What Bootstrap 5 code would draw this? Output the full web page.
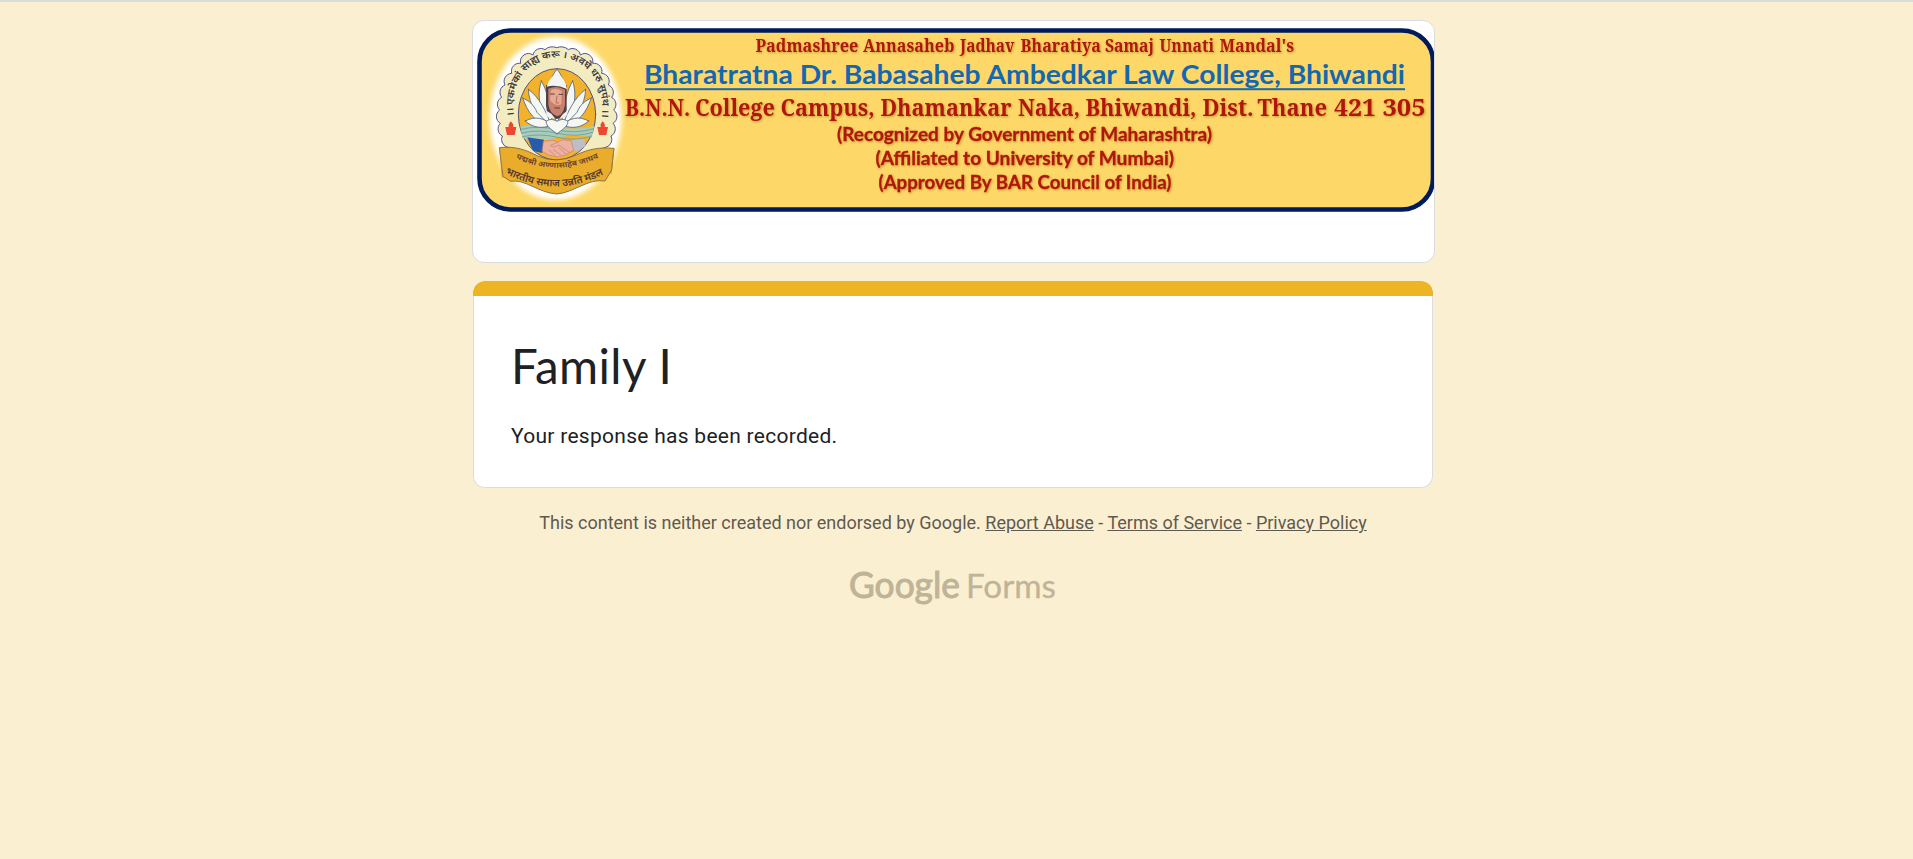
<!DOCTYPE html>
<html lang="en">
<head>
<meta charset="utf-8">
<meta name="viewport" content="width=device-width, initial-scale=1">
<title>Family I</title>
<link href="https://cdn.jsdelivr.net/npm/bootstrap@5.3.0/dist/css/bootstrap.min.css" rel="stylesheet">
<style>
  body { background: #fbefd2; border-top: 2px solid #dadce0; min-height: 100vh; padding-right: 7px; color: #202124; font-family: Roboto, Arial, sans-serif; }
  .form-column { width: 960px; padding-top: 18px; }
  .form-panel { border: 1px solid #dadce0; border-radius: 12px; overflow: hidden; }
  .banner-panel { width: 963px; height: 243px; margin-left: -1px; }
  .accent { height: 15px; background: #edb424; border-radius: 12px 12px 0 0; }
  .response-panel { margin-top: 18px; height: 207px; border: 0; box-shadow: inset 0 0 0 1px #dadce0; }
  .response-body { padding: 40px 37px 0 38px; }
  .form-title { font-family: Lato, sans-serif; font-size: 47.5px; line-height: 60px; letter-spacing: .45px; font-weight: 400; margin: 0; }
  .response-text { font-size: 21px; line-height: 30px; letter-spacing: .28px; margin: 25px 0 0; }
  .legal { font-size: 18px; line-height: 27px; color: #5f5a4f; margin-top: 21px; }
  .legal a { color: inherit; }
  .forms-logo { margin-top: 22px; }
  .serif { font-family: "Noto Serif", "DejaVu Serif Condensed", "DejaVu Serif", serif; font-weight: 700; }
  .sans { font-family: Lato, sans-serif; font-weight: 700; }
  .hindi { font-family: "Noto Sans Devanagari", "Noto Sans", sans-serif; font-weight: 600; }
</style>
</head>
<body>
<main class="form-column mx-auto">
  <section class="form-panel banner-panel bg-white">
    <svg class="d-block" width="961" height="241" viewBox="473 21 961 241">
      <defs>
        <filter id="glow" x="-20%" y="-20%" width="140%" height="140%"><feGaussianBlur stdDeviation="8"/></filter>
        <filter id="shade" x="-5%" y="-20%" width="110%" height="150%"><feDropShadow dx="1" dy="1" stdDeviation=".8" flood-color="#8a5a18" flood-opacity=".5"/></filter>
        <path id="arch" d="M147 318 C118 84 432 84 411 318"/>
        <path id="row1" d="M152 445 Q275 504 408 440"/>
        <path id="row2" d="M120 490 Q275 570 426 488"/>
      </defs>
      <rect x="479.5" y="30.5" width="953.5" height="179" rx="31" fill="#fdd767" stroke="#001b5c" stroke-width="4.6"/>
      <g transform="translate(465 10) scale(.33333)" stroke-linejoin="round" stroke-linecap="round">
        <ellipse cx="272" cy="325" rx="198" ry="245" fill="#fff" filter="url(#glow)"/>
        <path fill="#f3ecc0" stroke="#51518c" stroke-width="3" d="M128 412 A24 24 0 0 1 112 378 A24 24 0 0 1 106 340 A24 24 0 0 1 104 300 A24 24 0 0 1 110 262 A24 24 0 0 1 120 225 A24 24 0 0 1 140 190 A24 24 0 0 1 167 160 A24 24 0 0 1 204 135 A24 24 0 0 1 240 119 A30 24 0 0 1 275 113 A30 24 0 0 1 310 119 A24 24 0 0 1 346 135 A24 24 0 0 1 383 160 A24 24 0 0 1 410 190 A24 24 0 0 1 430 225 A24 24 0 0 1 440 262 A24 24 0 0 1 446 300 A24 24 0 0 1 444 340 A24 24 0 0 1 438 378 A24 24 0 0 1 422 412 L275 460Z"/>
        <ellipse cx="276" cy="313" rx="116" ry="137" fill="#f2b22b" stroke="#555279" stroke-width="3"/>
        <text class="hindi" font-size="30" fill="#42383a"><textPath href="#arch" textLength="505" lengthAdjust="spacingAndGlyphs">।। एकमेकां साह्य करू । अवघे धरु सुपंथ ।।</textPath></text>
        <path fill="#a9cbb9" d="M166 348 Q220 338 275 350 T388 348 L380 383 Q330 370 275 384 T172 384Z"/>
        <path fill="none" stroke="#6e9c9b" stroke-width="2.5" d="M168 358 Q220 345 275 359 T386 356 M170 369 Q222 357 278 370 T383 367 M173 380 Q222 369 278 382 T380 378"/>
        <g fill="#f5f7f2" stroke="#53627a" stroke-width="2.5">
          <path d="M276 178 C245 210 244 280 276 338 C308 280 306 210 276 178Z"/>
          <path d="M229 213 C215 255 222 310 262 345 C258 290 246 240 229 213Z M323 213 C337 255 330 310 290 345 C294 290 306 240 323 213Z"/>
          <path d="M190 238 C192 285 218 332 260 350 C246 308 222 260 190 238Z M362 238 C360 285 334 332 292 350 C306 308 330 260 362 238Z"/>
          <path d="M173 264 C190 272 206 282 216 307 L253 345 C210 339 188 307 173 264Z M379 264 C362 272 346 282 336 307 L299 345 C342 339 364 307 379 264Z"/>
          <path d="M181 333 C210 316 240 325 260 345 C232 358 202 353 181 333Z M371 333 C342 316 312 325 292 345 C320 358 350 353 371 333Z"/>
          <path d="M276 371 C260 360 244 349 243 335 C253 326 264 327 276 334 C288 327 299 326 309 335 C308 349 292 360 276 371Z"/>
        </g>
        <path fill="#4c4148" d="M243 225 H305 V300 Q299 325 275 327 Q244 322 243 285Z"/>
        <path fill="#c9806d" d="M250 236 Q276 225 300 239 V284 Q294 317 276 319 Q253 310 250 283Z"/>
        <path fill="#e8a993" d="M258 241 Q274 232 290 244 L289 283 Q269 290 255 270Z"/>
        <path fill="#f5f4f5" d="M245 230 Q254 200 277 188 Q300 205 306 237 Q274 222 245 230Z"/>
        <path fill="none" stroke="#5c3d44" stroke-width="3" d="M257 252 H268 M282 253 H293 M269 294 H284"/>
        <path fill="none" stroke="#a8625a" stroke-width="2.5" d="M276 258 L273 279 H281"/>
        <path fill="#eef0f1" d="M244 302 L259 311 L271 326 Q252 324 244 318Z M307 302 L294 312 L283 326 Q301 322 307 314Z"/>
        <path fill="#295bac" d="M187 382 L237 389 L232 429 L204 423Z"/>
        <path fill="#bcbfc8" d="M318 391 L357 386 L362 407 L338 424 L324 421Z"/>
        <path fill="#edb1a0" stroke="#c98075" stroke-width="2" d="M236 394 L264 391 L278 397 L292 389 L319 393 L326 421 L303 434 L278 441 L250 435 L232 424Z"/>
        <path fill="none" stroke="#c47c73" stroke-width="2" d="M278 397 L257 406 Q266 416 281 405 L313 427 M265 419 L286 434 M252 420 L270 436 M282 413 L302 431"/>
        <g fill="#ed4631">
          <path d="M121 351 H154 L149 375 H126Z M132 351 Q127 345 138 334 Q147 344 144 351Z"/>
          <path d="M397 351 H429 L424 375 H402Z M408 351 Q403 345 413 334 Q422 344 419 351Z"/>
        </g>
        <path fill="#e9ac2b" stroke="#806038" stroke-width="2.5" d="M104 413 C150 407 184 420 218 438 Q274 463 334 435 C370 417 405 411 447 415 L440 480 L420 513 C367 505 327 548 276 552 C220 549 180 506 137 514 L115 500Z"/>
        <path fill="none" stroke="#a77b30" stroke-width="2" d="M104 413 L112 502 M447 415 L438 491"/>
        <text class="hindi" font-size="23" fill="#67402f"><textPath href="#row1" textLength="258" lengthAdjust="spacingAndGlyphs">पद्मश्री अण्णासाहेब जाधव</textPath></text>
        <text class="hindi" font-size="31" fill="#51372f"><textPath href="#row2" textLength="308" lengthAdjust="spacingAndGlyphs">भारतीय समाज उन्नति मंडल</textPath></text>
      </g>
      <g class="serif" fill="#b11507" filter="url(#shade)">
        <text y="52" font-size="17.3"><tspan x="755.5" textLength="103" lengthAdjust="spacingAndGlyphs">Padmashree</tspan> <tspan x="863" textLength="91.5" lengthAdjust="spacingAndGlyphs">Annasaheb</tspan> <tspan x="960" textLength="54.5" lengthAdjust="spacingAndGlyphs">Jadhav</tspan> <tspan x="1020.5" textLength="80.5" lengthAdjust="spacingAndGlyphs">Bharatiya</tspan> <tspan x="1105" textLength="49" lengthAdjust="spacingAndGlyphs">Samaj</tspan> <tspan x="1159.5" textLength="54.5" lengthAdjust="spacingAndGlyphs">Unnati</tspan> <tspan x="1219.5" textLength="74.5" lengthAdjust="spacingAndGlyphs">Mandal's</tspan></text>
        <text y="116" font-size="23.3"><tspan x="625" textLength="65" lengthAdjust="spacingAndGlyphs">B.N.N.</tspan> <tspan x="695" textLength="80" lengthAdjust="spacingAndGlyphs">College</tspan> <tspan x="780.5" textLength="94" lengthAdjust="spacingAndGlyphs">Campus,</tspan> <tspan x="880.5" textLength="131" lengthAdjust="spacingAndGlyphs">Dhamankar</tspan> <tspan x="1018" textLength="62" lengthAdjust="spacingAndGlyphs">Naka,</tspan> <tspan x="1085.5" textLength="111" lengthAdjust="spacingAndGlyphs">Bhiwandi,</tspan> <tspan x="1202.5" textLength="51" lengthAdjust="spacingAndGlyphs">Dist.</tspan> <tspan x="1257.5" textLength="69.5" lengthAdjust="spacingAndGlyphs">Thane</tspan> <tspan x="1334" textLength="42" lengthAdjust="spacingAndGlyphs">421</tspan> <tspan x="1382.5" textLength="43" lengthAdjust="spacingAndGlyphs">305</tspan></text>
      </g>
      <g class="sans" fill="#1468b1">
        <text x="644" y="84" font-size="27.5" textLength="761" lengthAdjust="spacingAndGlyphs">Bharatratna Dr. Babasaheb Ambedkar Law College, Bhiwandi</text>
        <rect x="645" y="88.2" width="760" height="2"/>
      </g>
      <g class="sans" fill="#b11507" stroke="#b11507" stroke-width=".3" font-size="18.6" filter="url(#shade)">
        <text x="837" y="140.5" textLength="375" lengthAdjust="spacingAndGlyphs">(Recognized by Government of Maharashtra)</text>
        <text x="875.5" y="165" textLength="298.5" lengthAdjust="spacingAndGlyphs">(Affiliated to University of Mumbai)</text>
        <text x="878.5" y="189.3" textLength="293" lengthAdjust="spacingAndGlyphs">(Approved By BAR Council of India)</text>
      </g>
    </svg>
  </section>

  <section class="form-panel response-panel bg-white">
    <div class="accent"></div>
    <div class="response-body">
      <h1 class="form-title">Family I</h1>
      <p class="response-text">Your response has been recorded.</p>
    </div>
  </section>

  <footer class="text-center">
    <div class="legal text-nowrap">This content is neither created nor endorsed by Google. <a href="#">Report Abuse</a> - <a href="#">Terms of Service</a> - <a href="#">Privacy Policy</a></div>
    <svg class="forms-logo" width="208" height="50" viewBox="849 557 208 50" fill="#bfb497" stroke="#bfb497" font-family="Lato, sans-serif">
      <text x="849" y="596.5" font-size="36" stroke-width="1" textLength="111" lengthAdjust="spacingAndGlyphs">Google</text>
      <text x="966" y="596.5" font-size="33" stroke-width=".3" textLength="90" lengthAdjust="spacingAndGlyphs">Forms</text>
    </svg>
  </footer>
</main>
<script src="https://cdn.jsdelivr.net/npm/bootstrap@5.3.0/dist/js/bootstrap.bundle.min.js"></script>
</body>
</html>
